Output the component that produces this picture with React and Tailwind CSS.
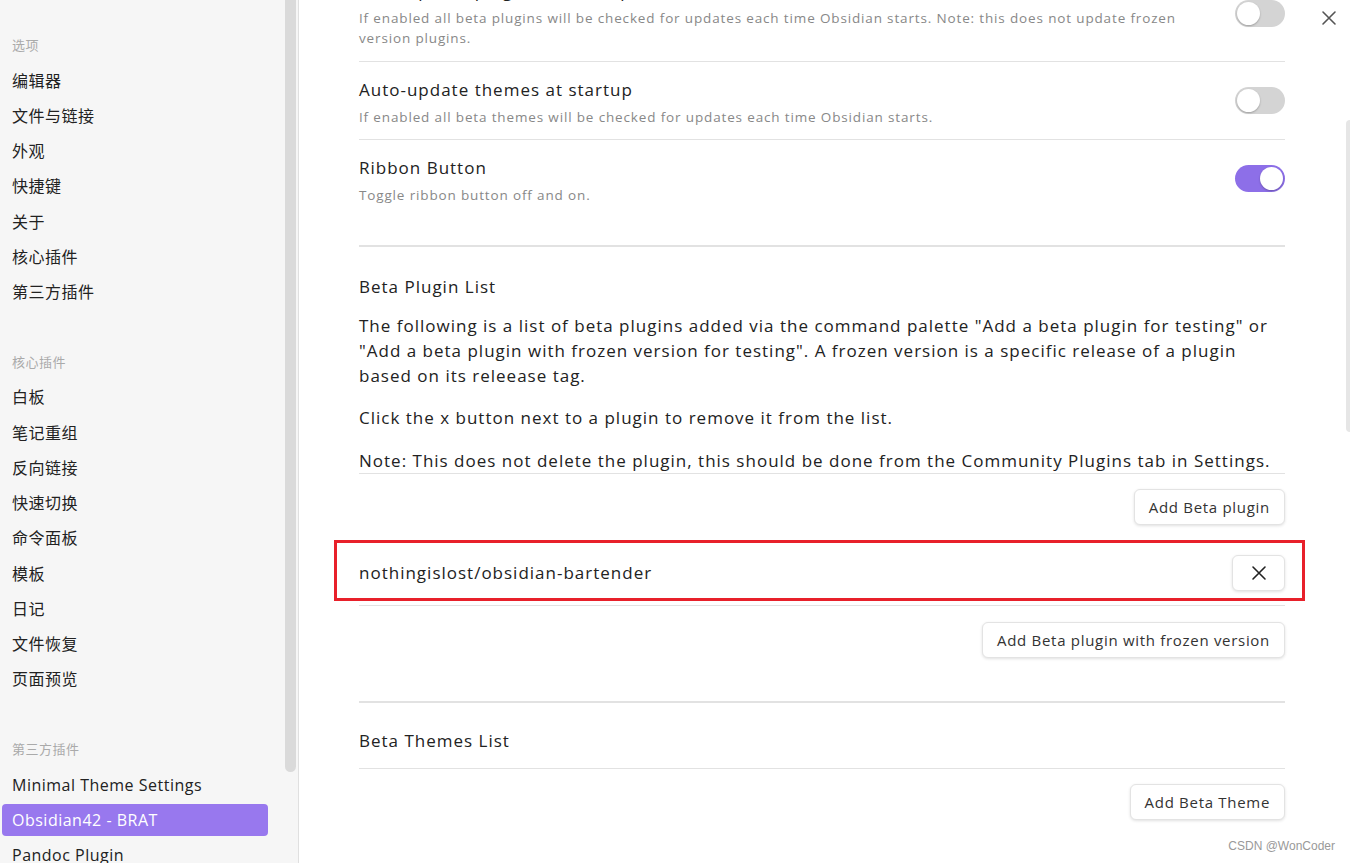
import React from 'react';

const base = { fontFamily: '"Open Sans", "Noto Sans CJK SC", sans-serif' };

const groups = [
  { title: '选项', items: ['编辑器', '文件与链接', '外观', '快捷键', '关于', '核心插件', '第三方插件'] },
  { title: '核心插件', items: ['白板', '笔记重组', '反向链接', '快速切换', '命令面板', '模板', '日记', '文件恢复', '页面预览'] },
  { title: '第三方插件', items: ['Minimal Theme Settings', 'Obsidian42 - BRAT', 'Pandoc Plugin'] },
];

const Toggle = ({ on, className = '' }) => (
  <div className={`w-[50px] h-[27px] rounded-full flex items-center px-[2px] shrink-0 ${on ? 'bg-[#8d6fe8] justify-end' : 'bg-[#d4d4d4] justify-start'} ${className}`}>
    <div className="w-[23px] h-[23px] rounded-full bg-white shadow-[0_1px_2px_rgba(0,0,0,0.25)]"></div>
  </div>
);

const SettingRow = ({ title, desc, on, first }) => (
  <div className={`flex items-center justify-between gap-8 pt-[17px] ${first ? 'pb-[13px]' : 'pb-[12px] border-t border-[#e2e2e2]'}`}>
    <div>
      <div className="text-[17px] leading-[22px] text-[#222]">{title}</div>
      <div className="mt-[6px] text-[13.5px] leading-[20px] text-[#888] tracking-[0.85px] max-w-[830px]">{desc}</div>
    </div>
    <Toggle on={on} className={first ? '-translate-y-[1px]' : '-translate-y-[3px]'} />
  </div>
);

const Btn = ({ children, className = '' }) => (
  <button className={`h-[36px] px-[14px] bg-white border border-[#e3e3e3] rounded-[6px] shadow-[0_1px_3px_rgba(0,0,0,0.12)] text-[15px] text-[#333] tracking-[0.7px] ${className}`}>
    {children}
  </button>
);

export default function App() {
  return (
    <div className="relative w-[1350px] h-[863px] flex overflow-hidden bg-white" style={base}>
      {/* SIDEBAR */}
      <aside className="w-[299px] shrink-0 flex bg-[#f6f6f6] border-r border-[#e0e0e0] tracking-[0.5px]">
        <nav className="w-[285px] pt-[28px]">
          {groups.map((g, gi) => (
            <div key={g.title} className={gi === 0 ? '' : 'mt-[35px]'}>
              <div className="h-[35px] flex items-center px-[12px] text-[13px] text-[#aaa]">{g.title}</div>
              {g.items.map((it) => (
                <div key={it} className="h-[35.25px] flex items-center">
                  <div className={`flex items-center px-[10px] mx-[2px] h-[32px] w-[266px] rounded-[4px] text-[16px] ${it === 'Obsidian42 - BRAT' ? 'bg-[#9878ee] text-white' : 'text-[#222]'}`}>
                    {it}
                  </div>
                </div>
              ))}
            </div>
          ))}
        </nav>
        <div className="w-[11px] h-[772px] bg-[#dadada] rounded-b-full"></div>
      </aside>

      {/* MAIN */}
      <main className="flex-1 pl-[60px] pr-[65px] tracking-[1px]">
        <div className="-mt-[37px]">
          <SettingRow first title="Auto-update plugins at startup" desc="If enabled all beta plugins will be checked for updates each time Obsidian starts. Note: this does not update frozen version plugins." />
          <SettingRow title="Auto-update themes at startup" desc="If enabled all beta themes will be checked for updates each time Obsidian starts." />
          <SettingRow on title="Ribbon Button" desc="Toggle ribbon button off and on." />

          <div className="mt-[28px] border-t-2 border-[#e2e2e2]">
            <div className="pt-[29px] text-[17px] leading-[22px] text-[#222]">Beta Plugin List</div>
            <div className="text-[17px] leading-[25px] text-[#222]">
              <p className="mt-[15px]">The following is a list of beta plugins added via the command palette "Add a beta plugin for testing" or "Add a beta plugin with frozen version for testing". A frozen version is a specific release of a plugin based on its releease tag.</p>
              <p className="mt-[17px]">Click the x button next to a plugin to remove it from the list.</p>
              <p className="mt-[18px]"><span>Note:</span> This does not delete the plugin, this should be done from the Community Plugins tab in Settings.</p>
            </div>
            <div className="border-t border-[#e2e2e2] pt-[15px] pb-[15px] flex justify-end">
              <Btn>Add Beta plugin</Btn>
            </div>
            <div className="relative border-t border-[#e2e2e2] py-[14px] flex items-center justify-between">
              <span className="text-[17px] text-[#222]">nothingislost/obsidian-bartender</span>
              <Btn className="w-[53px] flex items-center justify-center px-0">
                <svg width="16" height="16" viewBox="0 0 16 16" fill="none" stroke="#222" strokeWidth="1.6" strokeLinecap="round">
                  <path d="M2 2 L14 14 M14 2 L2 14" />
                </svg>
              </Btn>
              <div className="absolute -left-[25px] -right-[20px] -top-[1px] h-[61px] border-[3px] border-[#e8202a]"></div>
            </div>
            <div className="border-t border-[#e2e2e2] pt-[16px] pb-[15px] flex justify-end">
              <Btn>Add Beta plugin with frozen version</Btn>
            </div>
          </div>

          <div className="mt-[28px] border-t-2 border-[#e2e2e2]">
            <div className="pt-[27px] pb-[16px] text-[17px] leading-[22px] text-[#222]">Beta Themes List</div>
            <div className="border-t border-[#e2e2e2] pt-[15px] pb-[16px] flex justify-end">
              <Btn>Add Beta Theme</Btn>
            </div>
          </div>
        </div>
      </main>

      {/* close button */}
      <div className="absolute left-[1321px] top-[10px]">
        <svg width="16" height="16" viewBox="0 0 16 16" fill="none" stroke="#555" strokeWidth="1.6" strokeLinecap="round">
          <path d="M2 2 L14 14 M14 2 L2 14" />
        </svg>
      </div>

      {/* main scrollbar thumb */}
      <div className="absolute right-0 top-[120px] w-[4px] h-[312px] bg-[#e6e6e6] rounded-l-full"></div>

      {/* watermark */}
      <div className="absolute right-[15px] bottom-[8px] text-[12px] text-[#999]" style={{ fontFamily: '"Liberation Sans", sans-serif' }}>
        CSDN @WonCoder
      </div>
    </div>
  );
}
